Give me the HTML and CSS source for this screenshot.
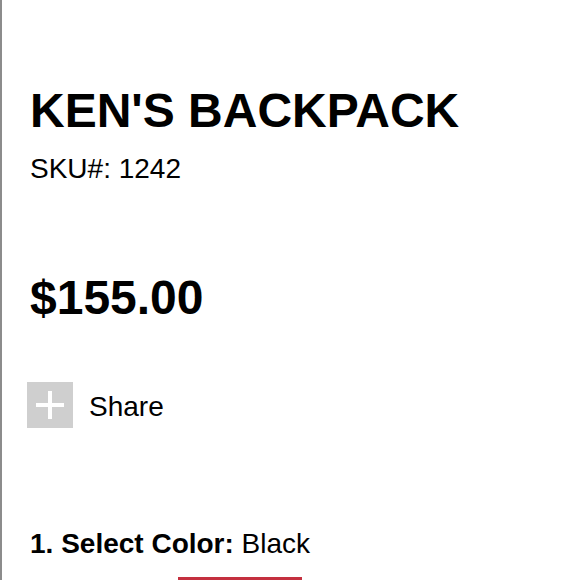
FILE: index.html
```html
<!DOCTYPE html>
<html>
<head>
<meta charset="utf-8">
<link rel="stylesheet" href="styles.css">
</head>
<body>
<main class="product">
  <h1 class="title">KEN'S BACKPACK</h1>
  <p class="sku">SKU#: 1242</p>
  <p class="price">$155.00</p>
  <div class="share">
    <span class="share-box">
      <svg width="46" height="46" viewBox="0 0 46 46"><rect x="21" y="9" width="4" height="28" fill="#fff"/><rect x="9" y="21" width="28" height="4" fill="#fff"/></svg>
    </span>
    <span class="share-label">Share</span>
  </div>
  <p class="select"><strong>1. Select Color:</strong> Black</p>
  <div class="swatches">
    <span class="swatch-indicator"></span>
  </div>
</main>
</body>
</html>
```
FILE: styles.css
```css
html, body {
  margin: 0;
  padding: 0;
  background: #fff;
}
body {
  font-family: "Liberation Sans", Arial, Helvetica, sans-serif;
  color: #000;
  height: 580px;
  overflow: hidden;
}
.product {
  border-left: 2px solid #8c8c8c;
  padding: 83px 0 0 28px;
  height: 580px;
  box-sizing: border-box;
}
.title {
  margin: 0;
  font-size: 48px;
  line-height: 56px;
  font-weight: bold;
}
.sku {
  margin: 14px 0 0;
  font-size: 28px;
  line-height: 32px;
}
.price {
  margin: 85px 0 0;
  font-size: 48px;
  line-height: 56px;
  font-weight: bold;
}
.share {
  display: flex;
  align-items: center;
  gap: 16px;
  height: 46px;
  margin: 56px 0 0 -3px;
}
.share-box {
  display: block;
  width: 46px;
  height: 46px;
  background: #cfcfcf;
}
.share-box svg {
  display: block;
}
.share-label {
  font-size: 28px;
  line-height: 42px;
  padding-top: 4px;
}
.select {
  margin: 99px 0 0;
  font-size: 28px;
  line-height: 34px;
}
.select strong {
  font-weight: bold;
}
.swatches {
  display: flex;
  margin: 16px 0 0 148px;
}
.swatch-indicator {
  display: block;
  width: 124px;
  height: 3px;
  background: #c4303f;
}
```
